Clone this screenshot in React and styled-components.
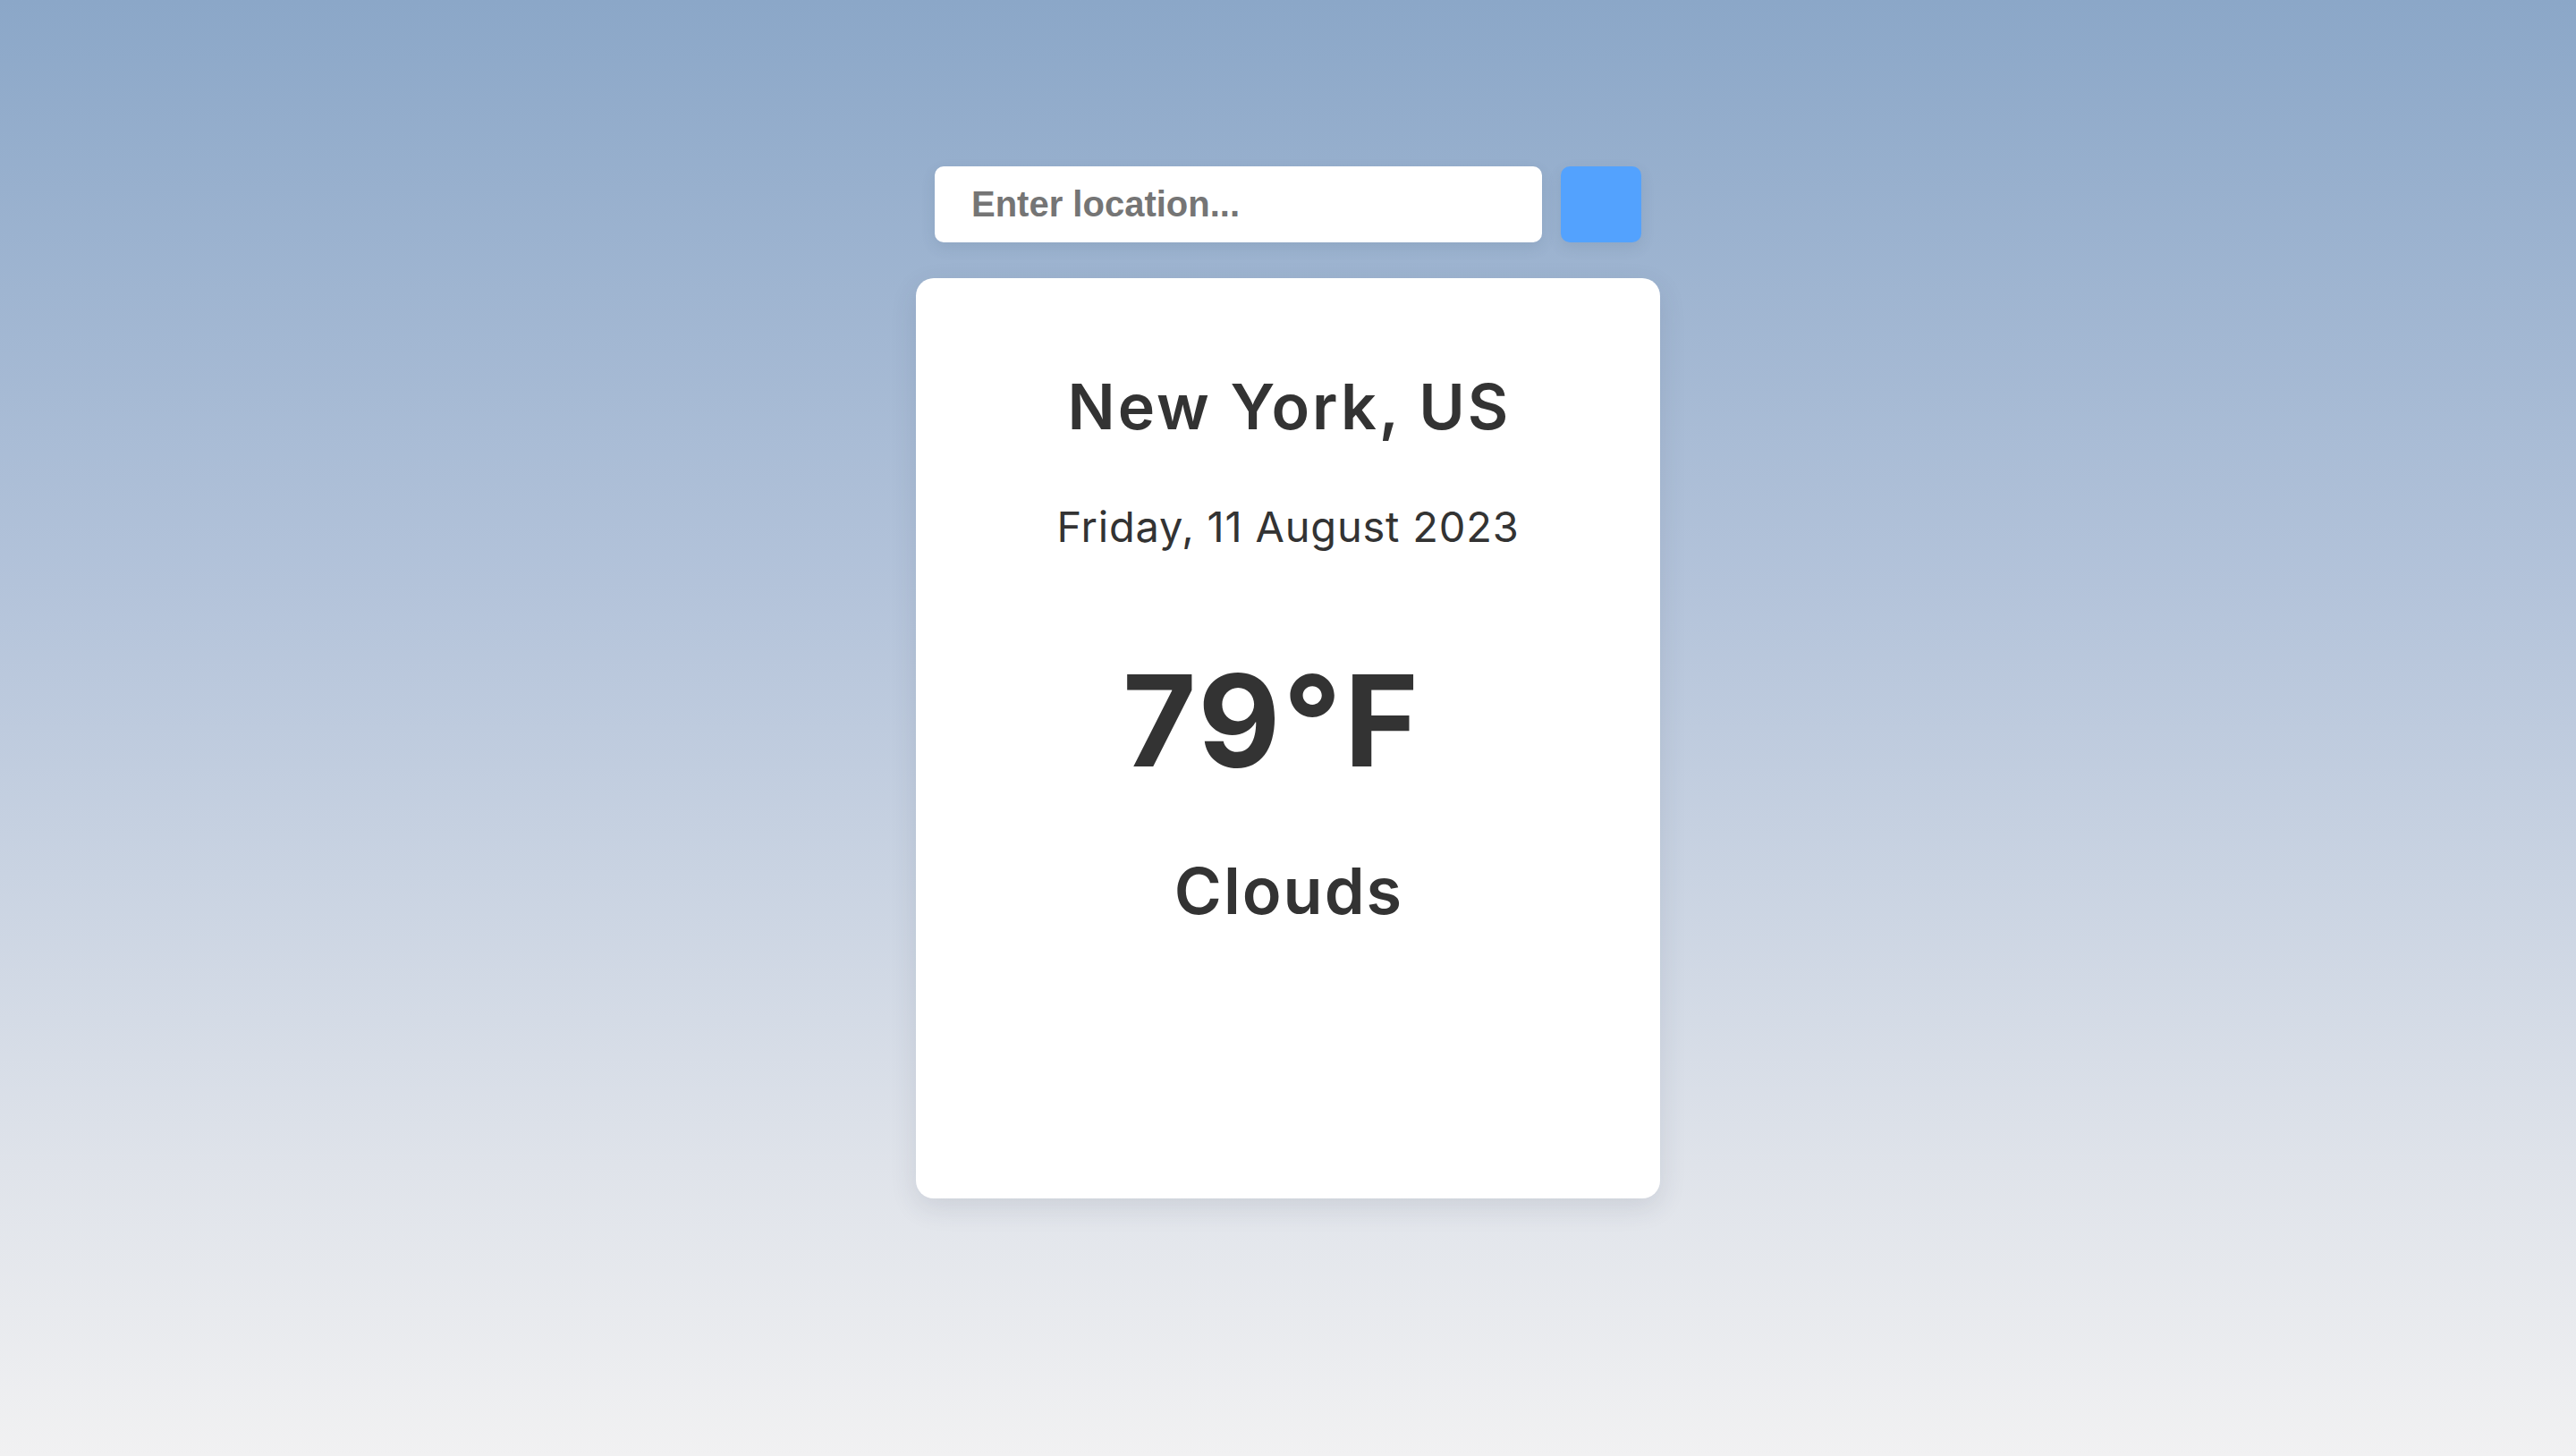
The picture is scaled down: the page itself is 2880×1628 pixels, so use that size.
import React, { useState } from "react";
import styled, { createGlobalStyle } from "styled-components";

const GlobalStyle = createGlobalStyle`
  * {
    box-sizing: border-box;
  }
  body {
    margin: 0;
    min-height: 100vh;
    background: linear-gradient(180deg, #8ba7c8 0%, #b3c3da 40%, #dfe3ea 80%, #f1f1f2 100%);
    font-family: Inter, "Open Sans", sans-serif;
  }
`;

const weather = {
  city: "New York, US",
  date: "Friday, 11 August 2023",
  temp: "79°F",
  desc: "Clouds",
};

const App = () => {
  const [query, setQuery] = useState("");

  return (
    <Page>
      <GlobalStyle />
      <SearchRow>
        <SearchInput
          type="text"
          placeholder="Enter location..."
          value={query}
          onChange={(e) => setQuery(e.target.value)}
        />
        <SearchButton aria-label="search" />
      </SearchRow>

      <Card>
        <City>{weather.city}</City>
        <DateText>{weather.date}</DateText>
        <Temp>{weather.temp}</Temp>
        <Desc>{weather.desc}</Desc>
      </Card>
    </Page>
  );
};

export default App;

const Page = styled.main`
  min-height: 100vh;
  display: flex;
  flex-direction: column;
  align-items: center;
  padding-top: 186px;
`;

const SearchRow = styled.div`
  display: flex;
  gap: 21px;
  width: 790px;
`;

const SearchInput = styled.input`
  width: 679px;
  height: 85px;
  border: none;
  border-radius: 10px;
  padding: 0 41px;
  background: #fff;
  font-family: "Liberation Sans", Arial, sans-serif;
  font-weight: 700;
  font-size: 40px;
  color: #333;
  box-shadow: 0 6px 16px rgba(60, 80, 110, 0.12);
  outline: none;

  &::placeholder {
    color: #757575;
  }
`;

const SearchButton = styled.button`
  width: 90px;
  height: 85px;
  border: none;
  border-radius: 10px;
  background: #53a2fe;
  box-shadow: 0 6px 16px rgba(60, 80, 110, 0.12);
  cursor: pointer;
`;

const Card = styled.section`
  margin-top: 40px;
  width: 832px;
  height: 1029px;
  border-radius: 20px;
  background: #fff;
  box-shadow: 0 10px 30px rgba(50, 60, 80, 0.12);
  padding-top: 109px;
  display: flex;
  flex-direction: column;
  align-items: center;
  color: #333;
  text-align: center;
`;

const City = styled.h1`
  margin: 0;
  padding-left: 3px;
  font-size: 70px;
  line-height: 1;
  font-weight: 600;
  letter-spacing: 3px;
`;

const DateText = styled.p`
  margin: 75px 0 0;
  font-size: 47px;
  line-height: 1;
  font-weight: 400;
  letter-spacing: 0.8px;
`;

const Temp = styled.div`
  margin-top: 122px;
  padding-right: 36px;
  font-size: 142px;
  line-height: 1;
  font-weight: 700;
  letter-spacing: 3px;
`;

const Desc = styled.h2`
  margin: 84px 0 0;
  padding-left: 2px;
  font-size: 72px;
  line-height: 1;
  font-weight: 600;
  letter-spacing: 2px;
`;
